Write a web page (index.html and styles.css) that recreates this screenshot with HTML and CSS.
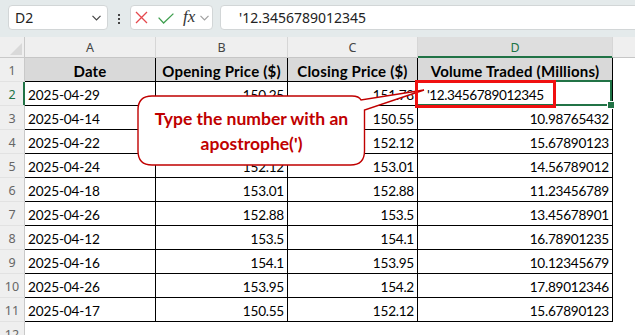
FILE: index.html
```html
<!DOCTYPE html>
<html>
<head>
<meta charset="utf-8">
<link rel="stylesheet" href="styles.css">
</head>
<body>
<div class="app">
  <div class="toolbar">
    <div class="namebox"><span>D2</span><svg class="chev" width="9" height="6" viewBox="0 0 9 6"><polyline points="0.5,0.8 4.5,4.8 8.5,0.8" fill="none" stroke="#444" stroke-width="1.2"/></svg></div>
    <div class="dots"><i></i><i></i><i></i></div>
    <div class="fxgroup">
      <svg class="xicon" width="13" height="13" viewBox="0 0 13 13"><path d="M1 1L12 12M12 1L1 12" stroke="#e5484d" stroke-width="1.3" fill="none"/></svg>
      <svg class="check" width="16" height="11" viewBox="0 0 16 11"><polyline points="0.6,4.6 5.6,10 15.4,0.6" fill="none" stroke="#3f9f4f" stroke-width="1.3"/></svg>
      <span class="fx">fx</span>
      <svg class="chev2" width="9" height="6" viewBox="0 0 9 6"><polyline points="0.5,0.8 4.5,4.8 8.5,0.8" fill="none" stroke="#a0a0a0" stroke-width="1.2"/></svg>
    </div>
    <div class="formula">'12.3456789012345</div>
  </div>
  <div class="sheet">
    <div class="corner"><svg width="12" height="12" viewBox="0 0 12 12"><polygon points="0,12 12,12 12,0" fill="#d9d9d9"/></svg></div>
    <div class="ch">A</div><div class="ch">B</div><div class="ch">C</div><div class="ch sel">D</div><div class="ch last"></div>

    <div class="rh">1</div><div class="c h">Date</div><div class="c h">Opening Price ($)</div><div class="c h">Closing Price ($)</div><div class="c h">Volume Traded (Millions)</div><div class="e"></div>

    <div class="rh selr">2</div><div class="c">2025-04-29</div><div class="c n">150.25</div><div class="c n">151.78</div><div class="c active">'12.3456789012345</div><div class="e"></div>

    <div class="rh">3</div><div class="c">2025-04-14</div><div class="c n">151.78</div><div class="c n">150.55</div><div class="c n">10.98765432</div><div class="e"></div>

    <div class="rh">4</div><div class="c">2025-04-22</div><div class="c n">150.55</div><div class="c n">152.12</div><div class="c n">15.67890123</div><div class="e"></div>

    <div class="rh">5</div><div class="c">2025-04-24</div><div class="c n">152.12</div><div class="c n">153.01</div><div class="c n">14.56789012</div><div class="e"></div>

    <div class="rh">6</div><div class="c">2025-04-18</div><div class="c n">153.01</div><div class="c n">152.88</div><div class="c n">11.23456789</div><div class="e"></div>

    <div class="rh">7</div><div class="c">2025-04-26</div><div class="c n">152.88</div><div class="c n">153.5</div><div class="c n">13.45678901</div><div class="e"></div>

    <div class="rh">8</div><div class="c">2025-04-12</div><div class="c n">153.5</div><div class="c n">154.1</div><div class="c n">16.78901235</div><div class="e"></div>

    <div class="rh">9</div><div class="c">2025-04-16</div><div class="c n">154.1</div><div class="c n">153.95</div><div class="c n">10.12345679</div><div class="e"></div>

    <div class="rh">10</div><div class="c">2025-04-26</div><div class="c n">153.95</div><div class="c n">154.2</div><div class="c n">17.89012346</div><div class="e"></div>

    <div class="rh">11</div><div class="c">2025-04-17</div><div class="c n">150.55</div><div class="c n">152.12</div><div class="c n">15.67890123</div><div class="e"></div>

    <div class="rh">12</div><div class="e"></div><div class="e"></div><div class="e"></div><div class="e"></div><div class="e"></div>
  </div>

  <svg class="callout-shape" width="300" height="90" viewBox="130 85 300 90">
    <path d="M152 96 L352 96 Q359 96 361 100 L424 90 L364.5 110 L364.5 151 Q364.5 165 350.5 165 L152 165 Q138 165 138 151 L138 110 Q138 96 152 96 Z" fill="#fff" stroke="#c00000" stroke-width="1.4"/>
  </svg>
  <div class="callout-text">Type the number with an<br>apostrophe(')</div>
  <div class="redbox"></div>
</div>
</body>
</html>
```

FILE: styles.css
```css
* { box-sizing: border-box; }
body { margin: 0; background: #fff; }
.app {
  position: relative;
  width: 635px;
  height: 335px;
  overflow: hidden;
  background: #fff;
}
.toolbar {
  height: 37px;
  background: #e4eaeb;
  display: flex;
  align-items: flex-start;
  padding: 5px 0 0 8px;
  font-family: "Noto Sans", "Open Sans", sans-serif;
}
.namebox {
  width: 100px;
  height: 25px;
  background: #fff;
  border: 1px solid #d2d6d7;
  border-radius: 4px;
  display: flex;
  align-items: center;
  justify-content: space-between;
  padding: 0 6px;
  font-size: 14px;
  color: #222;
}
.namebox .chev { margin-top: 1px; }
.dots {
  width: 22px;
  height: 25px;
  display: flex;
  flex-direction: column;
  align-items: center;
  justify-content: center;
  gap: 2px;
  padding-top: 2px;
}
.dots i {
  display: block;
  width: 2px;
  height: 2px;
  background: #444;
}
.fxgroup {
  width: 83px;
  height: 25px;
  background: #fff;
  border: 1px solid #d2d6d7;
  border-radius: 4px;
  display: flex;
  align-items: center;
  padding-left: 4px;
}
.check { margin-left: 10px; margin-top: 1px; }
.fx {
  margin-left: 9px;
  font-family: "Liberation Serif", "DejaVu Serif", serif;
  font-style: italic;
  font-size: 17px;
  color: #333;
  line-height: 1;
  margin-top: -2px;
}
.chev2 { margin-left: 5px; }
.formula {
  flex: 1;
  margin-left: 7px;
  margin-right: -10px;
  height: 25px;
  background: #fff;
  border: 1px solid #d2d6d7;
  border-radius: 4px;
  padding-left: 18px;
  display: flex;
  align-items: center;
  font-size: 14px;
  color: #222;
}
.sheet {
  display: grid;
  grid-template-columns: 25px 131px 132px 130px 195px 22px;
  grid-template-rows: 21px;
  grid-auto-rows: 24px;
}
.corner {
  background: #efefef;
  border-right: 1px solid #c9c9c9;
  border-bottom: 1px solid #c9c9c9;
  display: flex;
  align-items: flex-end;
  justify-content: flex-end;
  padding: 0 2px 2px 0;
}
.ch {
  background: #efefef;
  border-right: 1px solid #d6d6d6;
  border-bottom: 1px solid #c6c6c6;
  display: flex;
  align-items: center;
  justify-content: center;
  font-family: "Noto Sans", "Open Sans", sans-serif;
  font-size: 12.5px;
  color: #444;
  padding-top: 1px;
}
.ch.sel {
  background: #dedede;
  color: #217346;
  border-bottom: 1px solid #217346;
  box-shadow: inset 0 -1px 0 #217346;
}
.ch.last { border-right: none; }
.rh {
  background: #efefef;
  border-right: 1px solid #c9c9c9;
  border-bottom: 1px solid #e2e2e2;
  display: flex;
  align-items: center;
  justify-content: center;
  font-family: "Noto Sans", "Open Sans", sans-serif;
  font-size: 12.5px;
  color: #666;
  padding-top: 2px;
}
.rh.selr {
  color: #217346;
  border-right-color: #217346;
  box-shadow: inset -1px 0 0 #217346;
}
.c {
  border-right: 1px solid #000;
  border-bottom: 1px solid #000;
  display: flex;
  align-items: center;
  padding: 2px 3px 0 3px;
  font-family: "Lato", "Liberation Sans", sans-serif;
  font-size: 13.6px;
  letter-spacing: -0.15px;
  color: #000;
  white-space: nowrap;
}
.c.n {
  justify-content: flex-end;
  font-variant-numeric: tabular-nums;
  letter-spacing: -0.25px;
}
.c.h {
  background: #d9d9d9;
  font-weight: 700;
  justify-content: center;
  font-size: 15px;
  letter-spacing: 0.2px;
}
.c.active {
  position: relative;
  padding-left: 9px;
  letter-spacing: -0.45px;
}
.c.active::after {
  content: "";
  position: absolute;
  left: -2px;
  top: -2px;
  right: 0;
  bottom: -1px;
  border: 2px solid #217346;
}
.c.active::before {
  content: "";
  position: absolute;
  right: -3px;
  bottom: -4px;
  width: 6px;
  height: 6px;
  background: #217346;
  border: 1px solid #fff;
  z-index: 2;
}
.e { background: #fff; }
.callout-shape {
  position: absolute;
  left: 130px;
  top: 85px;
}
.callout-text {
  position: absolute;
  left: 138px;
  top: 96px;
  width: 227px;
  height: 69px;
  display: flex;
  align-items: center;
  justify-content: center;
  text-align: center;
  font-family: "Lato", "Liberation Sans", sans-serif;
  font-weight: 700;
  font-size: 17.5px;
  line-height: 25px;
  color: #c00000;
}
.redbox {
  position: absolute;
  left: 415px;
  top: 80px;
  width: 141px;
  height: 28px;
  border: 3px solid #f01010;
}
```
